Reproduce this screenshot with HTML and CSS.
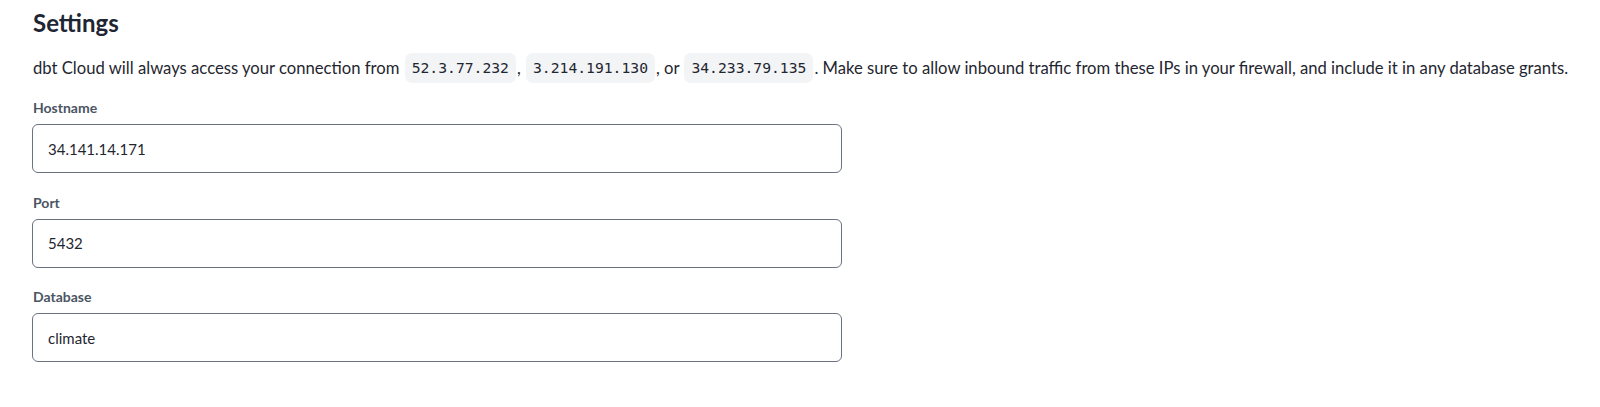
FILE: index.html
```html
<!DOCTYPE html>
<html lang="en">
<head>
<meta charset="utf-8">
<title>Settings</title>
<link rel="stylesheet" href="styles.css">
</head>
<body>
<main class="page">
  <h2 class="title">Settings</h2>
  <p class="note">dbt Cloud will always access your connection from <code class="ip">52.3.77.232</code>, <code class="ip">3.214.191.130</code>, or <code class="ip">34.233.79.135</code>. Make sure to allow inbound traffic from these IPs in your firewall, and include it in any database grants.</p>
  <div class="field">
    <label class="label">Hostname</label>
    <div class="input">34.141.14.171</div>
  </div>
  <div class="field">
    <label class="label">Port</label>
    <div class="input">5432</div>
  </div>
  <div class="field">
    <label class="label">Database</label>
    <div class="input">climate</div>
  </div>
</main>
</body>
</html>
```
FILE: styles.css
```css
* { box-sizing: border-box; }
html, body { margin: 0; background: #fff; }
body {
  font-family: "Lato", "Noto Sans", "Liberation Sans", sans-serif;
  color: #1f2937;
}
.page {
  padding: 6px 0 0 33px;
}
.title {
  margin: 0;
  font-size: 24px;
  line-height: 34px;
  font-weight: 700;
  color: #1e2533;
}
.note {
  margin: 13px 0 0;
  font-size: 16.65px;
  line-height: 30px;
  white-space: nowrap;
  color: #1f2630;
}
.ip {
  display: inline-block;
  vertical-align: top;
  font-family: "DejaVu Sans Mono", "Liberation Mono", monospace;
  font-size: 14.7px;
  line-height: 30px;
  padding: 0 7px;
  margin: 0 1px;
  background: #f3f4f6;
  border-radius: 7px;
  color: #1f2630;
}
.field {
  display: flex;
  flex-direction: column;
  gap: 7px;
  width: 810px;
  margin-top: 16px;
  margin-left: -1px;
}
.field + .field { margin-top: 20.5px; }
.label {
  font-size: 14px;
  line-height: 18px;
  font-weight: 700;
  color: #4b5563;
  padding-left: 1px;
}
.input {
  height: 49px;
  border: 1px solid #6b7280;
  border-radius: 6px;
  padding: 0 15px;
  display: flex;
  align-items: center;
  font-size: 15px;
  color: #1f2630;
}
```
